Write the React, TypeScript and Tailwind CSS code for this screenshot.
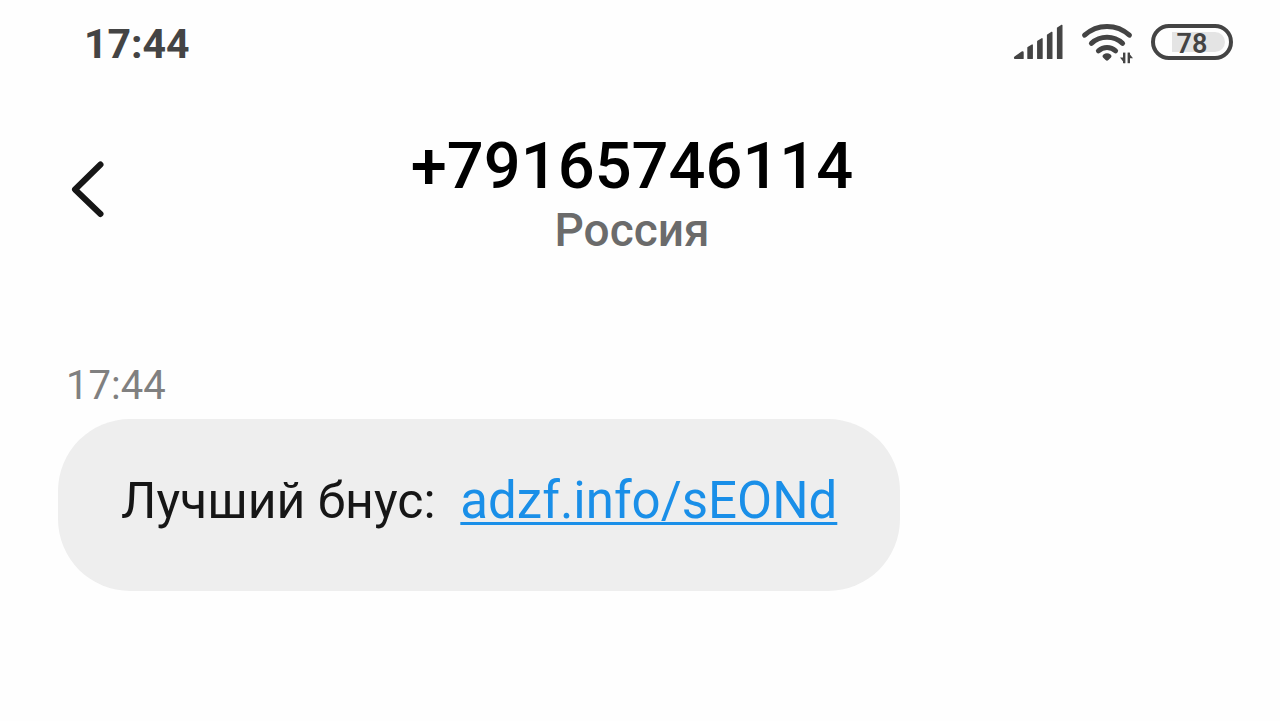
import * as React from "react";

function SignalIcon() {
  return (
    <svg className="h-10 w-[52px]" viewBox="0 0 52 40" fill="#444" stroke="#444" strokeWidth="1.4" strokeLinejoin="round" aria-label="Сигнал" role="img">
      <path d="M2 35 L9 30.2 Q10 29.6 10 30.6 V36.4 H2 Q1.2 36 2 35 Z" />
      <path d="M15 25.6 L19.2 23 V36.4 H15 Z" />
      <path d="M24.8 19.4 L29 16.8 V36.4 H24.8 Z" />
      <path d="M34.6 13 L38.8 10.4 V36.4 H34.6 Z" />
      <path d="M44.6 6 L48.8 3.4 V36.4 H44.6 Z" />
    </svg>
  );
}

function WifiIcon() {
  return (
    <svg className="h-10 w-[54px] overflow-visible" viewBox="0 0 54 40" fill="none" stroke="#444" aria-label="Wi-Fi" role="img">
      <g strokeWidth="5" strokeLinecap="round">
        <path d="M3.6 13.2 A33 33 0 0 1 48.4 13.2" />
        <path d="M10.4 21.4 A23 23 0 0 1 41.6 21.4" />
        <path d="M17.4 28.8 A13 13 0 0 1 34.6 28.8" />
      </g>
      <path d="M22.4 32.6 Q26 30 29.6 32.6 Q31.4 34 30 35.4 L27.4 38 Q26 39.4 24.6 38 L22 35.4 Q20.6 34 22.4 32.6 Z" fill="#444" stroke="none" />
      <g strokeWidth="2.4">
        <path d="M43.2 30.6 V41.2" />
        <path d="M47.8 41.2 V30.6" />
      </g>
      <path d="M43.6 41.4 L39 35.6 H43.6 Z M47.4 30.4 L52 36.2 H47.4 Z" fill="#444" stroke="none" />
    </svg>
  );
}

function Battery({ level }: { level: number }) {
  return (
    <div className="relative flex h-9 w-[82px] items-center justify-center rounded-full border-4 border-[#444]">
      <span className="absolute inset-y-1 right-1 rounded-r-full bg-[#e4e4e4]" style={{ width: `${level - 6}%` }} />
      <span className="relative pt-1 text-[27px] leading-none font-semibold">{level}</span>
    </div>
  );
}

export default function App() {
  return (
    <div className="min-h-screen bg-[#fefefe] font-['Roboto',sans-serif]">
      <header>
        <div className="flex h-[84px] items-center justify-between pr-[47px] pl-[84px] text-[#444]">
          <time className="pt-1 text-[41px] leading-none font-bold">17:44</time>
          <div className="flex items-center gap-4">
            <SignalIcon />
            <WifiIcon />
            <Battery level={78} />
          </div>
        </div>
        <div className="grid grid-cols-[1fr_auto_1fr] items-center pt-12 pr-[84px] pl-[68px]">
          <button type="button" aria-label="Назад" className="pb-4">
            <svg className="h-16 w-10" viewBox="0 0 40 64" fill="none" stroke="#161616" strokeWidth="6" strokeLinecap="round" strokeLinejoin="round">
              <path d="M32.5 8.5 L7 33.5 L32.5 58" />
            </svg>
          </button>
          <div className="text-center">
            <h1 className="text-[65px] leading-[68px] font-medium text-black">+79165746114</h1>
            <p className="text-[46px] leading-[60px] font-medium text-[#6b6b6b]">Россия</p>
          </div>
        </div>
      </header>
      <main className="px-[58px] pt-[97px]">
        <time className="block pb-1 pl-2 text-[40px] leading-[58px] text-[#808080]">17:44</time>
        <div className="inline-block rounded-[72px] bg-[#eee] px-[63px] pt-[46px] pb-[54px] text-[50px] leading-[72px] whitespace-pre text-[#161616]">
          Лучший бнус:{"  "}
          <a
            href="https://adzf.info/sEONd"
            className="text-[51px] text-[#1a8fe8] underline decoration-[3px] underline-offset-4 [text-decoration-skip-ink:none]"
          >
            adzf.info/sEONd
          </a>
        </div>
      </main>
    </div>
  );
}
